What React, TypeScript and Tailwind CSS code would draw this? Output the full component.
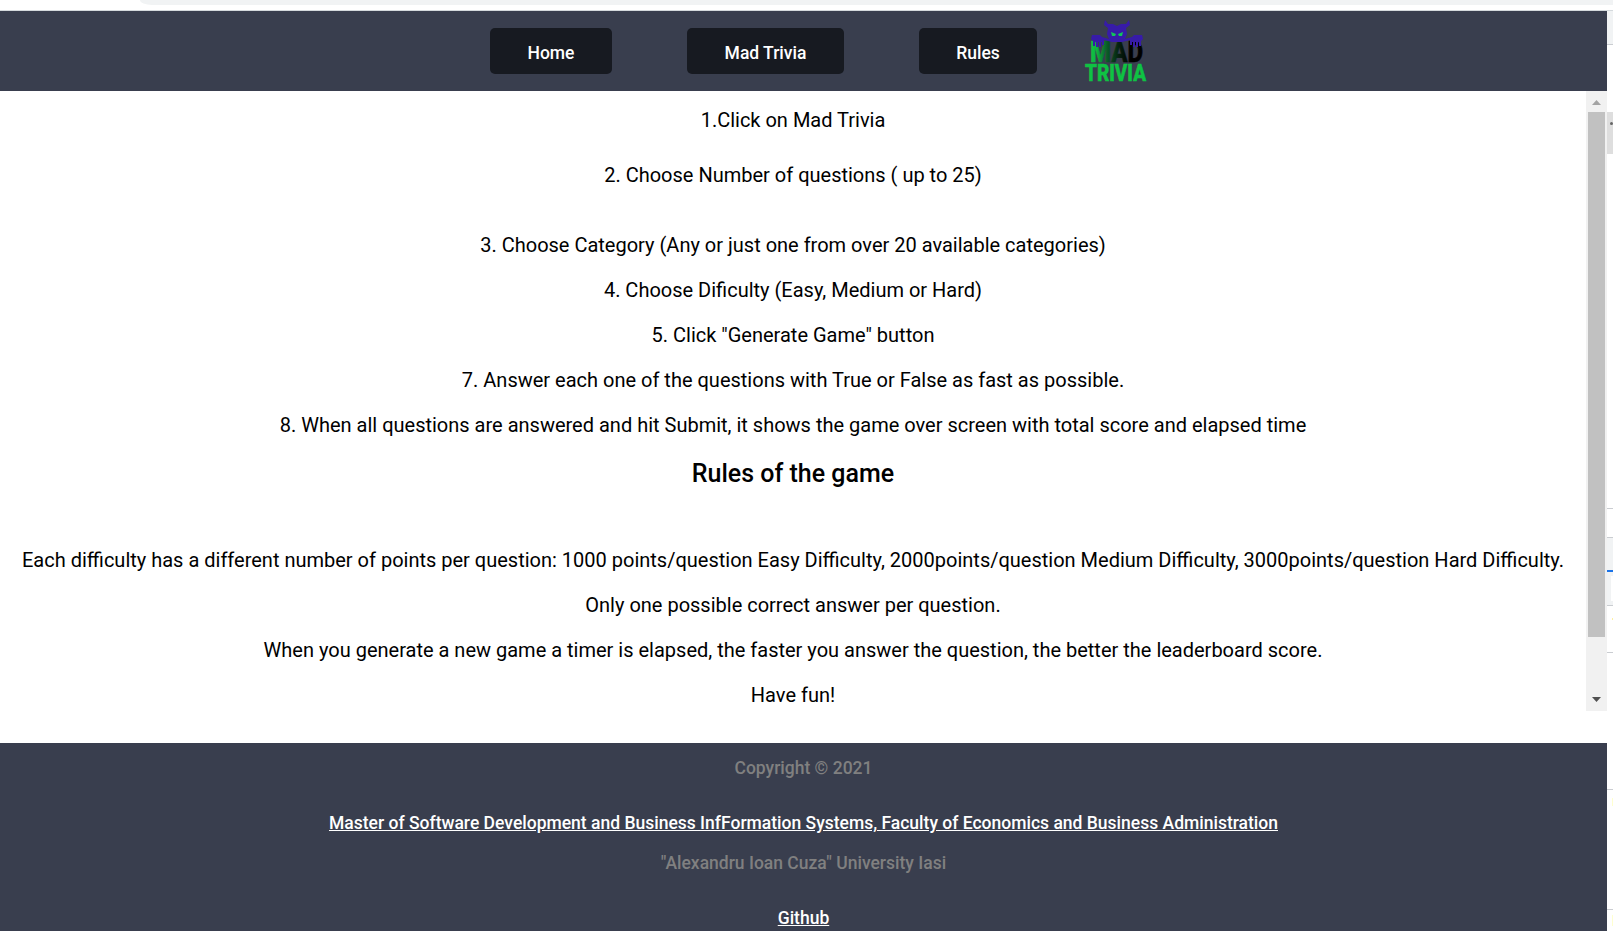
const steps = [
  { text: "1.Click on Mad Trivia", box: "h-[55px]" },
  { text: "2. Choose Number of questions ( up to 25)", box: "h-[70px]" },
  { text: "3. Choose Category (Any or just one from over 20 available categories)", box: "h-[45px]" },
  { text: "4. Choose Dificulty (Easy, Medium or Hard)", box: "h-[45px]" },
  { text: '5. Click "Generate Game" button', box: "h-[45px]" },
  { text: "7. Answer each one of the questions with True or False as fast as possible.", box: "h-[45px]" },
  { text: "8. When all questions are answered and hit Submit, it shows the game over screen with total score and elapsed time", box: "h-[45px]" },
];

const rules = [
  "Each difficulty has a different number of points per question: 1000 points/question Easy Difficulty, 2000points/question Medium Difficulty, 3000points/question Hard Difficulty.",
  "Only one possible correct answer per question.",
  "When you generate a new game a timer is elapsed, the faster you answer the question, the better the leaderboard score.",
  "Have fun!",
];

const navItems = [
  { label: "Home", width: "w-[122px]" },
  { label: "Mad Trivia", width: "w-[157px]" },
  { label: "Rules", width: "w-[118px]" },
];

function Logo() {
  return (
    <svg className="h-[62px] w-[62px] overflow-visible" viewBox="0 0 62 62" fontFamily="Roboto, sans-serif" fontWeight="800">
      <defs>
        <linearGradient id="fade" gradientUnits="userSpaceOnUse" x1="6" y1="0" x2="46" y2="0">
          <stop offset="0" stopColor="#0fc243" />
          <stop offset="0.15" stopColor="#0fb33f" />
          <stop offset="0.4" stopColor="#0a5c28" />
          <stop offset="0.7" stopColor="#06200f" />
          <stop offset="1" stopColor="#000000" />
        </linearGradient>
      </defs>
      <text x="5" y="43" fontSize="30" fill="url(#fade)" stroke="url(#fade)" strokeWidth="0.6" textLength="53" lengthAdjust="spacingAndGlyphs">MAD</text>
      <text x="0" y="61.6" fontSize="24" fill="#0fc243" stroke="#0fc243" strokeWidth="0.6" textLength="61" lengthAdjust="spacingAndGlyphs">TRIVIA</text>
      <path
        fill="#371ba8"
        d="M20 1 L19 6 L23 9 L22 15 L24 20 L17 18 L15 16 H7 L6 20 L8 22 V27 H10 V23 H11 V28 H13 V23 H14 V28 H16 V23 H17 V26 H19 V21 L27 23 H37 L45 21 V26 H47 V23 H48 V28 H50 V23 H51 V28 H53 V23 H54 V27 H56 V22 L58 20 L57 16 H49 L47 18 L40 20 L42 15 L41 9 L45 6 L44 1 L41 5 H36 L32 7 L28 5 H23 Z"
      />
      <path fill="#12c65b" d="M26 13 L31 15 L30 17 H27 Z M38 13 L33 15 L34 17 H37 Z" />
    </svg>
  );
}

function ScrollBar() {
  return (
    <div className="flex h-[620px] w-[21px] flex-col items-center bg-[#f1f1f1]">
      <svg className="h-[21px] w-[21px] shrink-0" viewBox="0 0 21 21" fill="#a3a3a3">
        <path d="M6 14 L10.5 9 L15 14 Z" />
      </svg>
      <div className="h-[525px] w-[17px] bg-[#c1c1c1]" />
      <svg className="mt-auto h-[21px] w-[21px] shrink-0" viewBox="0 0 21 21" fill="#505050">
        <path d="M6 7 L10.5 12 L15 7 Z" />
      </svg>
    </div>
  );
}

function SidePanel() {
  return (
    <div className="flex w-[6px] shrink-0 flex-col overflow-hidden bg-white">
      <div className="h-[34px] shrink-0 border-b border-[#cacdd1] bg-[#f1f3f4]" />
      <div className="h-[67px] shrink-0" />
      <div className="flex h-[42px] shrink-0 justify-end bg-[#dedede] pt-[10px]">
        <div className="h-[3px] w-[3px] rounded-full bg-[#666]" />
      </div>
      <div className="h-[355px] shrink-0 border-b border-[#cacdd1]" />
      <div className="h-[29px] shrink-0 border-b border-[#cacdd1]" />
      <div className="flex h-[68px] shrink-0 flex-col items-end border-b border-[#cacdd1] bg-[#f1f3f4] pt-[32px]">
        <div className="h-[2px] w-full bg-[#1a73e8]" />
        <div className="mt-[4px] h-[25px] w-[2px] bg-white" />
      </div>
      <div className="flex h-[47px] shrink-0 justify-end border-b border-[#cacdd1] pt-[12px]">
        <div className="h-[2px] w-px bg-[#fff0a0]" />
      </div>
      <div className="h-[137px] shrink-0 border-b border-[#cacdd1]" />
      <div className="flex h-[120px] shrink-0 justify-end border-b border-[#cacdd1] pt-[8px]">
        <div className="h-[8px] w-px bg-[#ffffd0]" />
      </div>
      <div className="flex shrink-0 justify-end pt-[5px]">
        <div className="h-[11px] w-px bg-[#ffffd0]" />
      </div>
    </div>
  );
}

export default function App() {
  return (
    <div className="flex h-[931px] w-[1613px] flex-col overflow-hidden bg-white font-['Roboto',sans-serif] text-black">
      <div className="h-[11px] shrink-0 border-b border-[#d5dadd] pl-[140px]">
        <div className="h-[5px] rounded-bl-[12px_5px] bg-[#f1f3f4]" />
      </div>
      <div className="flex min-h-0 flex-1">
        <div className="flex w-[1607px] shrink-0 flex-col">
          <header className="flex h-[80px] shrink-0 bg-[#393e4e] pl-[490px]">
            <nav className="flex gap-[75px] pt-[17px]">
              {navItems.map((item) => (
                <button
                  key={item.label}
                  className={"h-[46px] rounded-[5px] bg-[#171a21] pt-[5px] text-[17.5px] font-medium text-white " + item.width}
                >
                  {item.label}
                </button>
              ))}
            </nav>
            <div className="ml-[48px] pt-[8px]">
              <Logo />
            </div>
          </header>
          <div className="flex h-[652px] shrink-0">
            <main className="w-[1586px] pt-[14px] text-center text-[20px] leading-[30px]">
              {steps.map((step) => (
                <p key={step.text} className={"whitespace-nowrap " + step.box}>
                  {step.text}
                </p>
              ))}
              <h2 className="h-[90px] pt-[3px] text-[25px] leading-[32px] font-medium">Rules of the game</h2>
              {rules.map((rule) => (
                <p key={rule} className="h-[45px] whitespace-nowrap">
                  {rule}
                </p>
              ))}
            </main>
            <ScrollBar />
          </div>
          <footer className="flex min-h-0 flex-1 flex-col items-center bg-[#393e4e] pt-[13px] text-[17.5px] leading-[24px] font-medium text-[#808080]">
            <p className="h-[55px]">Copyright © 2021</p>
            <a className="h-[40px] text-white underline">
              Master of Software Development and Business InfFormation Systems, Faculty of Economics and Business Administration
            </a>
            <p className="h-[55px]">"Alexandru Ioan Cuza" University Iasi</p>
            <a className="text-white underline">Github</a>
          </footer>
        </div>
        <SidePanel />
      </div>
    </div>
  );
}
